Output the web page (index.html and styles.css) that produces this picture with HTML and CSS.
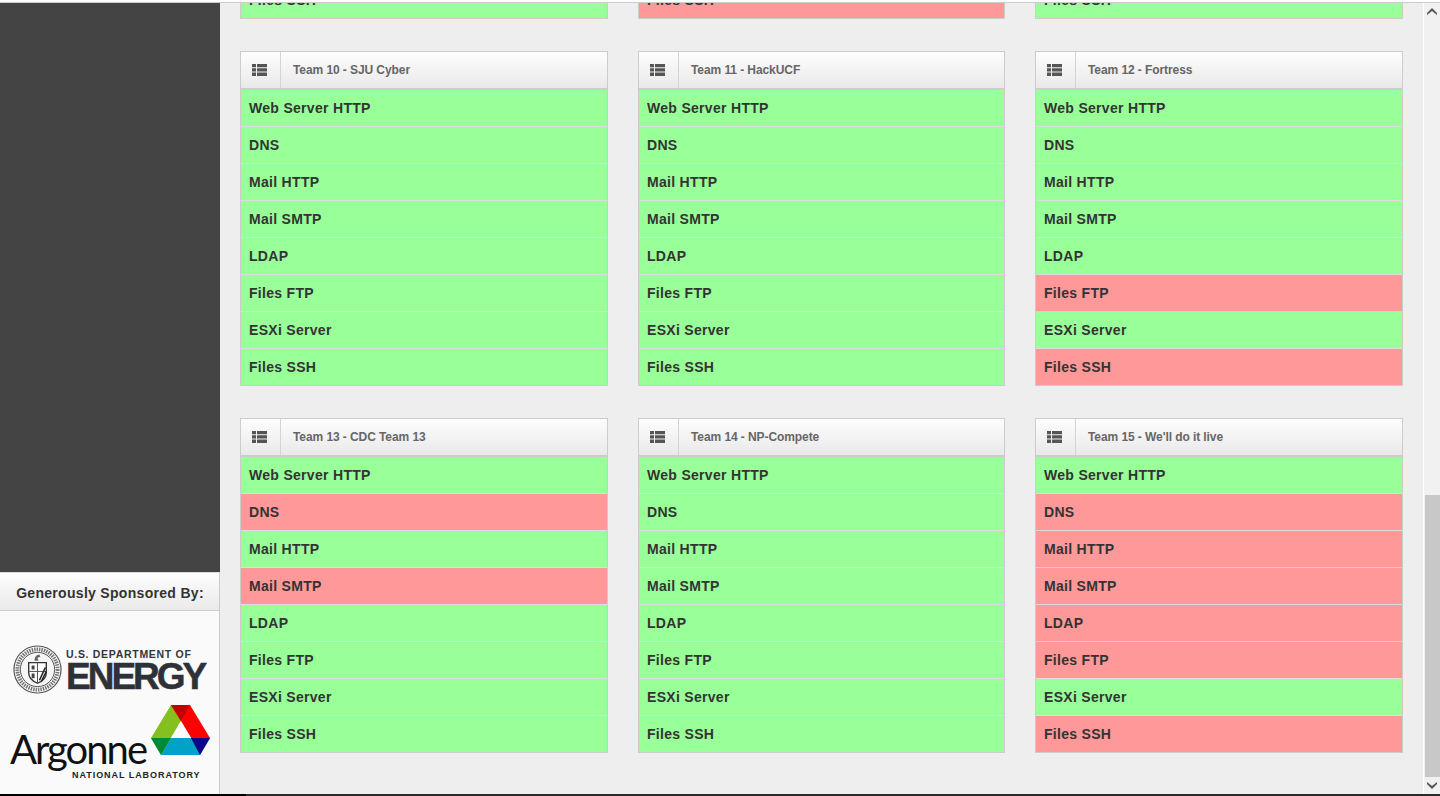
FILE: index.html
```html
<!DOCTYPE html>
<html lang="en">
<head>
<meta charset="utf-8">
<title>Team Status</title>
<link rel="stylesheet" href="styles.css">
</head>
<body>
<div class="top-line"></div>
<div class="main">
  <aside class="sidebar">
    <div class="side-fill"></div>
    <div class="sponsor-head">Generously Sponsored By:</div>
    <div class="sponsors">
      <div class="doe">
        <svg class="seal" viewBox="0 0 50 50" width="49" height="49" aria-hidden="true">
          <circle cx="25" cy="25" r="24" fill="#fafafa" stroke="#555" stroke-width="1.2"/>
          <circle cx="25" cy="25" r="20.5" fill="none" stroke="#777" stroke-width="4" stroke-dasharray="1.5 1"/>
          <circle cx="25" cy="25" r="17.500" fill="#f6f6f6" stroke="#555" stroke-width="1"/>
          <path d="M16 18h18v10c0 6-4 9-9 11-5-2-9-5-9-11z" fill="#fff" stroke="#333" stroke-width="1.4"/>
          <path d="M25 18v20M16 27h18" stroke="#555" stroke-width="1"/>
          <path d="M27 36l6-13M29 37l5-10" stroke="#222" stroke-width="1.6"/>
          <path d="M19 21h3v4h-3zM19 29h3v5h-3z" fill="#444"/>
          <path d="M22 16c0-4 2-6 5-6l1 2-3 1 1 3z" fill="#666"/>
        </svg>
        <div class="doe-text">
          <div class="doe-small">U.S. DEPARTMENT OF</div>
          <div class="doe-big">ENERGY</div>
        </div>
      </div>
      <div class="anl">
        <div class="anl-text">
          <div class="anl-name">Argonne</div>
          <div class="anl-sub">NATIONAL LABORATORY</div>
        </div>
        <svg class="anl-logo" viewBox="0 0 60 52" width="60" height="52" aria-hidden="true">
          <path d="M20 1L0 34l10 17 20-34z" fill="#84c11e"/>
          <path d="M20 1h19l20 33H40z" fill="#fe0000"/>
          <path d="M20 1h19l-9 16z" fill="#c30000"/>
          <path d="M10 51h39l10-17H20z" fill="#00a3c7"/>
          <path d="M0 34h20L10 51z" fill="#008a38"/>
          <path d="M40 34h19L49 51z" fill="#120088"/>
          <path d="M30 17l10 17H20z" fill="#fafafa"/>
        </svg>
      </div>
    </div>
  </aside>
  <main class="content">
    <section class="panel-grid">
      <div class="panel"><div class="row ok">Files SSH</div></div>
      <div class="panel"><div class="row bad">Files SSH</div></div>
      <div class="panel"><div class="row ok">Files SSH</div></div>

      <div class="panel">
        <div class="head"><span class="head-icon"><svg class="list" viewBox="0 0 15 12" width="15" height="12"><path d="M0 0h4v3.300H0zM5 0h10v3.300H5zM0 4.300h4v3.300H0zM5 4.300h10v3.300H5zM0 8.600h4v3.300H0zM5 8.600h10v3.300H5z"/></svg></span><span class="head-title">Team 10 - SJU Cyber</span></div>
        <div class="row ok">Web Server HTTP</div><div class="row ok">DNS</div><div class="row ok">Mail HTTP</div><div class="row ok">Mail SMTP</div><div class="row ok">LDAP</div><div class="row ok">Files FTP</div><div class="row ok">ESXi Server</div><div class="row ok">Files SSH</div>
      </div>
      <div class="panel">
        <div class="head"><span class="head-icon"><svg class="list" viewBox="0 0 15 12" width="15" height="12"><path d="M0 0h4v3.300H0zM5 0h10v3.300H5zM0 4.300h4v3.300H0zM5 4.300h10v3.300H5zM0 8.600h4v3.300H0zM5 8.600h10v3.300H5z"/></svg></span><span class="head-title">Team 11 - HackUCF</span></div>
        <div class="row ok">Web Server HTTP</div><div class="row ok">DNS</div><div class="row ok">Mail HTTP</div><div class="row ok">Mail SMTP</div><div class="row ok">LDAP</div><div class="row ok">Files FTP</div><div class="row ok">ESXi Server</div><div class="row ok">Files SSH</div>
      </div>
      <div class="panel">
        <div class="head"><span class="head-icon"><svg class="list" viewBox="0 0 15 12" width="15" height="12"><path d="M0 0h4v3.300H0zM5 0h10v3.300H5zM0 4.300h4v3.300H0zM5 4.300h10v3.300H5zM0 8.600h4v3.300H0zM5 8.600h10v3.300H5z"/></svg></span><span class="head-title">Team 12 - Fortress</span></div>
        <div class="row ok">Web Server HTTP</div><div class="row ok">DNS</div><div class="row ok">Mail HTTP</div><div class="row ok">Mail SMTP</div><div class="row ok">LDAP</div><div class="row bad">Files FTP</div><div class="row ok">ESXi Server</div><div class="row bad">Files SSH</div>
      </div>

      <div class="panel">
        <div class="head"><span class="head-icon"><svg class="list" viewBox="0 0 15 12" width="15" height="12"><path d="M0 0h4v3.300H0zM5 0h10v3.300H5zM0 4.300h4v3.300H0zM5 4.300h10v3.300H5zM0 8.600h4v3.300H0zM5 8.600h10v3.300H5z"/></svg></span><span class="head-title">Team 13 - CDC Team 13</span></div>
        <div class="row ok">Web Server HTTP</div><div class="row bad">DNS</div><div class="row ok">Mail HTTP</div><div class="row bad">Mail SMTP</div><div class="row ok">LDAP</div><div class="row ok">Files FTP</div><div class="row ok">ESXi Server</div><div class="row ok">Files SSH</div>
      </div>
      <div class="panel">
        <div class="head"><span class="head-icon"><svg class="list" viewBox="0 0 15 12" width="15" height="12"><path d="M0 0h4v3.300H0zM5 0h10v3.300H5zM0 4.300h4v3.300H0zM5 4.300h10v3.300H5zM0 8.600h4v3.300H0zM5 8.600h10v3.300H5z"/></svg></span><span class="head-title">Team 14 - NP-Compete</span></div>
        <div class="row ok">Web Server HTTP</div><div class="row ok">DNS</div><div class="row ok">Mail HTTP</div><div class="row ok">Mail SMTP</div><div class="row ok">LDAP</div><div class="row ok">Files FTP</div><div class="row ok">ESXi Server</div><div class="row ok">Files SSH</div>
      </div>
      <div class="panel">
        <div class="head"><span class="head-icon"><svg class="list" viewBox="0 0 15 12" width="15" height="12"><path d="M0 0h4v3.300H0zM5 0h10v3.300H5zM0 4.300h4v3.300H0zM5 4.300h10v3.300H5zM0 8.600h4v3.300H0zM5 8.600h10v3.300H5z"/></svg></span><span class="head-title">Team 15 - We'll do it live</span></div>
        <div class="row ok">Web Server HTTP</div><div class="row bad">DNS</div><div class="row bad">Mail HTTP</div><div class="row bad">Mail SMTP</div><div class="row bad">LDAP</div><div class="row bad">Files FTP</div><div class="row ok">ESXi Server</div><div class="row bad">Files SSH</div>
      </div>
    </section>
  </main>
  <div class="scrollbar">
    <svg class="arrow arrow-up" viewBox="0 0 10 7" width="10" height="7"><path d="M0 5L5 0l5 5v2L5 3 0 7z"/></svg>
    <div class="track"><div class="thumb"></div></div>
    <svg class="arrow arrow-down" viewBox="0 0 10 7" width="10" height="7"><path d="M0 0l5 4 5-4v2L5 7 0 2z"/></svg>
  </div>
</div>
<div class="bottom-line"><span class="bottom-left"></span><span class="bottom-right"></span></div>
</body>
</html>
```

FILE: styles.css
```css
* { box-sizing: border-box; }
html, body { margin: 0; height: 100%; overflow: hidden; }
body {
  display: flex;
  flex-direction: column;
  height: 796px;
  background: #eee;
  font-family: "Liberation Sans", Arial, sans-serif;
  color: #333;
}
.top-line { height: 3px; flex: none; background: #fff; border-bottom: 1px solid #ccc; }
.main { flex: 1; min-height: 0; display: flex; }
.bottom-line { height: 2px; flex: none; display: flex; }
.bottom-left { width: 246px; background: #000; }
.bottom-right { flex: 1; background: #2b2b2b; }

.sidebar { width: 220px; flex: none; display: flex; flex-direction: column; }
.side-fill { flex: 1; background: #444; }
.sponsor-head {
  height: 39px;
  flex: none;
  display: flex;
  align-items: center;
  justify-content: center;
  padding: 2px 0 0 1px;
  font-size: 14px;
  font-weight: bold;
  letter-spacing: 0.3px;
  color: #333;
  background: linear-gradient(#fdfdfd, #eaeaea);
  border-top: 1px solid #ddd;
  border-right: 1px solid #ccc;
  border-bottom: 1px solid #ccc;
}
.sponsors {
  height: 183px;
  flex: none;
  background: #fafafa;
  border-right: 1px solid #ccc;
  display: flex;
  flex-direction: column;
  padding: 34px 0 0 13px;
}
.doe { display: flex; align-items: flex-start; gap: 4px; height: 50px; }
.seal { flex: none; }
.doe-text { display: flex; flex-direction: column; padding-top: 4px; }
.doe-small { font-size: 10.5px; font-weight: bold; letter-spacing: 0.7px; color: #33363c; line-height: 11px; white-space: nowrap; }
.doe-big { font-size: 37px; font-weight: bold; line-height: 30px; letter-spacing: -3px; margin-top: 2px; color: #2e3138; -webkit-text-stroke: 0.5px #2e3138; white-space: nowrap; }
.anl { display: flex; align-items: flex-start; margin: 9px 0 0 -3px; }
.anl-text { padding-top: 23px; width: 141px; flex: none; }
.anl-name { font-family: Lato, "Open Sans", sans-serif; font-size: 40px; line-height: 44px; letter-spacing: -2px; color: #111; white-space: nowrap; }
.anl-sub { font-size: 9px; font-weight: bold; letter-spacing: 0.95px; color: #222; line-height: 9px; margin: 0 0 0 62px; white-space: nowrap; }
.anl-logo { flex: none; }

.content { width: 1203px; flex: none; display: flex; flex-direction: column; justify-content: flex-end; overflow: hidden; padding: 0 20px 41px; }
.panel-grid { display: grid; grid-template-columns: 368px 367px 368px; column-gap: 30px; row-gap: 32px; flex: none; }
.panel { border: 1px solid #ccc; background: #ccc; }
.head { height: 38px; display: flex; align-items: stretch; background: linear-gradient(#fdfdfd, #e9e9e9); border-bottom: 2px solid #ccc; }
.head-icon { width: 40px; flex: none; display: flex; align-items: center; justify-content: center; padding-right: 2px; border-right: 1px solid #d4d4d4; }
.list { fill: #555; }
.head-title { padding-left: 12px; display: flex; align-items: center; font-size: 12px; font-weight: bold; letter-spacing: -0.08px; color: #666; }
.row { height: 37px; padding: 0 8px; display: flex; align-items: center; font-size: 14px; font-weight: bold; letter-spacing: 0.3px; color: #333; border-bottom: 1px solid #c4f2bb; }
.row:last-child { height: 36px; border-bottom: 0; }
.ok { background: #99ff99; }
.bad { background: #ff9999; border-bottom-color: #f0c4c4; }
.panel:nth-child(n+4):nth-child(-n+6) .row:nth-child(even),
.panel:nth-child(n+7) .row:nth-child(odd) { border-bottom-color: #dddddd; }

.scrollbar { width: 17px; flex: none; display: flex; flex-direction: column; align-items: center; background: #f1f1f1; border-left: 1px solid #fff; padding-bottom: 1px; }
.arrow { flex: none; fill: #555; }
.arrow-up { margin: 5px 0 4px; }
.arrow-down { margin: 5px 0 4px; }
.track { flex: 1; width: 15px; display: flex; flex-direction: column; justify-content: flex-end; }
.thumb { height: 282px; background: #c8c8c8; }
```
